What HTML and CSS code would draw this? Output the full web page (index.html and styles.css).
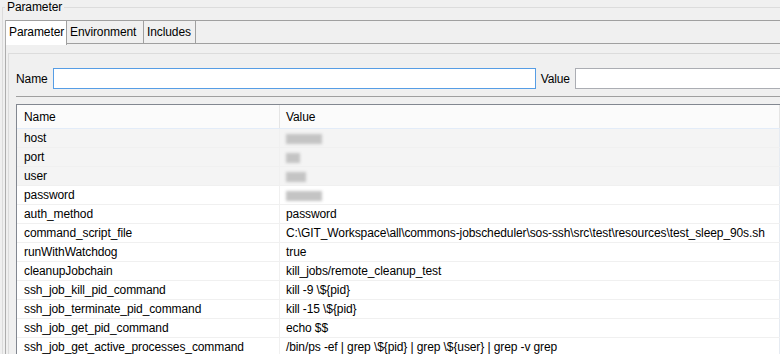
FILE: index.html
```html
<!DOCTYPE html>
<html lang="en">
<head>
  <meta charset="UTF-8" />
  <title>Parameter</title>
  <link rel="stylesheet" href="styles.css">
</head>
<body>
  <fieldset class="group">
    <legend>Parameter</legend>
    <div class="folder">
      <div class="tabs">
        <div class="tab tab-param active">Parameter</div>
        <div class="tab tab-env">Environment</div>
        <div class="tab tab-inc">Includes</div>
      </div>
      <div class="panel">
        <div class="inner">
          <div class="filter">
            <label for="pname">Name</label>
            <input type="text" id="pname" class="field focus" />
            <label for="pvalue">Value</label>
            <input type="text" id="pvalue" class="field" />
          </div>
          <div class="sep"></div>
          <div class="params">
            <div class="row head"><div class="cell">Name</div><div class="cell">Value</div></div>
            <div class="row shaded"><div class="cell">host</div><div class="cell"><span class="blur w-host"></span></div></div>
            <div class="row shaded"><div class="cell">port</div><div class="cell"><span class="blur w-port"></span></div></div>
            <div class="row shaded"><div class="cell">user</div><div class="cell"><span class="blur w-user"></span></div></div>
            <div class="row"><div class="cell">password</div><div class="cell"><span class="blur w-pass"></span></div></div>
            <div class="row"><div class="cell">auth_method</div><div class="cell">password</div></div>
            <div class="row"><div class="cell">command_script_file</div><div class="cell">C:\GIT_Workspace\all\commons-jobscheduler\sos-ssh\src\test\resources\test_sleep_90s.sh</div></div>
            <div class="row"><div class="cell">runWithWatchdog</div><div class="cell">true</div></div>
            <div class="row"><div class="cell">cleanupJobchain</div><div class="cell">kill_jobs/remote_cleanup_test</div></div>
            <div class="row"><div class="cell">ssh_job_kill_pid_command</div><div class="cell">kill -9 \${pid}</div></div>
            <div class="row"><div class="cell">ssh_job_terminate_pid_command</div><div class="cell">kill -15 \${pid}</div></div>
            <div class="row"><div class="cell">ssh_job_get_pid_command</div><div class="cell">echo $$</div></div>
            <div class="row"><div class="cell">ssh_job_get_active_processes_command</div><div class="cell">/bin/ps -ef | grep \${pid} | grep \${user} | grep -v grep</div></div>
          </div>
        </div>
      </div>
    </div>
  </fieldset>
</body>
</html>
```

FILE: styles.css
```css
html, body {
  margin: 0;
  height: 100%;
  overflow: hidden;
}
body {
  background: #f0f0f0;
  font-family: 'Segoe UI', 'Liberation Sans', Arial, sans-serif;
  font-size: 12px;
  letter-spacing: -0.1px;
  color: #000;
  width: 1200px;
}
.group {
  margin: 0 0 0 2px;
  padding: 6px 0 0 2px;
  border: 1px solid #dcdcdc;
  border-right: none;
  border-bottom: none;
}
.group legend {
  padding: 0 2px;
  line-height: 14px;
}
.folder {
  border-left: 1px solid #adadad;
}
.tabs {
  display: flex;
  height: 22px;
  border-top: 1px solid #a0a0a0;
  border-bottom: 1px solid #a0a0a0;
}
.tab {
  box-sizing: border-box;
  padding-left: 3px;
  line-height: 22px;
  border-right: 1px solid #a0a0a0;
}
.tab-param { width: 61px; }
.tab-env { width: 77px; }
.tab-inc { width: 52px; }
.tab.active {
  background: #fff;
  height: 24px;
  margin-bottom: -2px;
}
.panel {
  padding: 9px 0 0 2px;
}
.inner {
  border-top: 1px solid #dcdcdc;
  border-left: 1px solid #dcdcdc;
  padding: 14px 0 0 7px;
}
.filter {
  display: flex;
  align-items: center;
  gap: 5px;
  height: 21px;
}
.field {
  box-sizing: border-box;
  width: 483px;
  height: 21px;
  margin: 0;
  border: 1px solid #abadb3;
  background: #fff;
  outline: none;
}
.field.focus {
  border-color: #569de5;
}
.sep {
  margin-top: 7px;
  border-top: 1px solid #a0a0a0;
}
.params {
  margin-top: 7px;
  width: 763px;
  border-top: 1px solid #828790;
  border-left: 1px solid #828790;
  background: #fff;
}
.row {
  display: grid;
  grid-template-columns: 263px 500px;
  height: 18px;
  border-bottom: 1px solid #f0f0f0;
}
.cell {
  line-height: 18px;
  padding-left: 7px;
  white-space: nowrap;
  overflow: hidden;
  border-right: 1px solid #f0f0f0;
}
.cell + .cell {
  padding-left: 6px;
  border-right-color: #e6ebf2;
}
.row.head {
  height: 23px;
  background: #fbfbfb;
  border-bottom-color: #e3ecf8;
}
.row.head .cell {
  line-height: 24px;
  border-right-color: #e5e5e5;
}
.row.shaded {
  background: #f4f4f4;
}
.blur {
  display: inline-block;
  height: 10px;
  vertical-align: middle;
  background: #c4c4c4;
  filter: blur(1.5px);
}
.w-host { width: 36px; }
.w-port { width: 14px; }
.w-user { width: 20px; }
.w-pass { width: 36px; }
```
